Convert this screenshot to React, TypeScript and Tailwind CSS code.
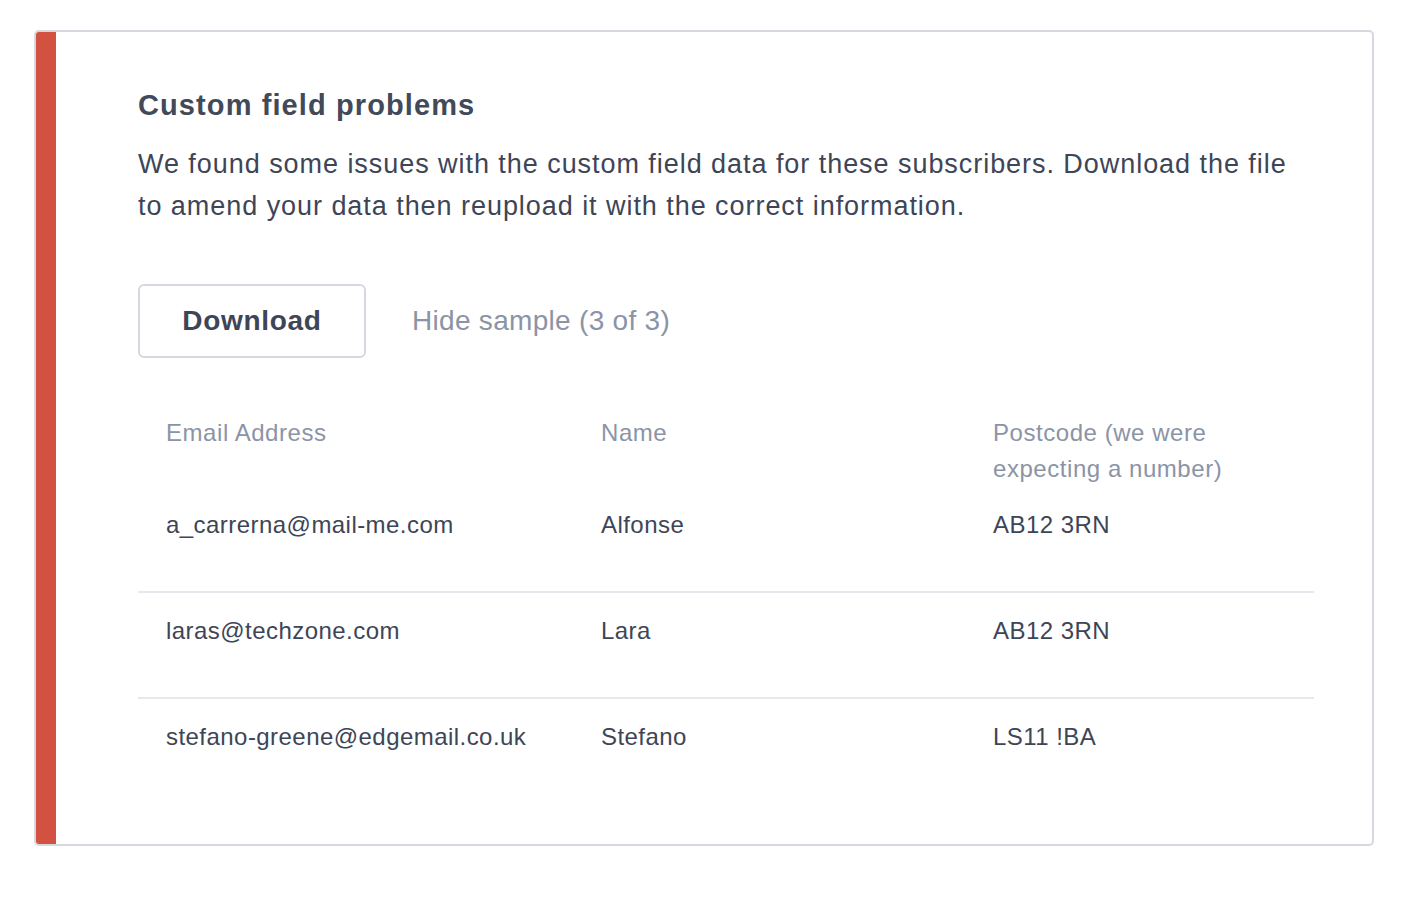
import React from "react";

const rows = [
  { email: "a_carrerna@mail-me.com", name: "Alfonse", post: "AB12 3RN" },
  { email: "laras@techzone.com", name: "Lara", post: "AB12 3RN" },
  { email: "stefano-greene@edgemail.co.uk", name: "Stefano", post: "LS11 !BA" },
];

export default function App() {
  return (
    <div
      className="min-h-[904px] w-[1408px] bg-white pl-[34px] pt-[30px]"
      style={{ fontFamily: '"Liberation Sans", Arial, sans-serif' }}
    >
      <div className="flex h-[816px] w-[1340px] overflow-hidden rounded-[5px] border-2 border-[#d5d9df] bg-white">
        <div className="w-[20px] shrink-0 bg-[#d35141]" />
        <div className="flex-1 pl-[82px] pr-[58px] pt-[55px]">
          <h2 className="text-[29px] font-bold leading-[36px] tracking-[1.1px] text-[#424959]">
            Custom field problems
          </h2>
          <p className="mt-[20px] text-[27px] leading-[42px] tracking-[0.95px] text-[#3e4556]">
            We found some issues with the custom field data for these subscribers. Download the file to amend your data then reupload it with the correct information.
          </p>
          <div className="mt-[57px] flex items-center">
            <button className="flex h-[74px] w-[228px] items-center justify-center rounded-[6px] border-2 border-[#d5d9df] bg-white text-[28px] font-bold tracking-[0.7px] text-[#3e4556]">
              Download
            </button>
            <span className="ml-[46px] text-[28px] tracking-[0.3px] text-[#8b94a6]">Hide sample (3 of 3)</span>
          </div>
          <div className="mt-[57px]">
            <div className="grid grid-cols-[435px_392px_1fr] text-[24px] leading-[36px] tracking-[0.55px] text-[#8b94a6]">
              <div className="pl-[28px]">Email Address</div>
              <div className="pl-[28px]">Name</div>
              <div className="pl-[28px] pr-[20px]">Postcode (we were expecting a number)</div>
            </div>
            {rows.map((r, i) => (
              <div
                key={r.email}
                className={
                  "grid grid-cols-[435px_392px_1fr] text-[24px] leading-[36px] tracking-[0.45px] text-[#3e4556] " +
                  (i < rows.length - 1 ? "h-[106px] border-b-2 border-[#e7e8ed] pt-[20px]" : "h-[104px] pt-[20px]")
                }
              >
                <div className="pl-[28px]">{r.email}</div>
                <div className="pl-[28px]">{r.name}</div>
                <div className="pl-[28px]">{r.post}</div>
              </div>
            ))}
          </div>
        </div>
      </div>
    </div>
  );
}
